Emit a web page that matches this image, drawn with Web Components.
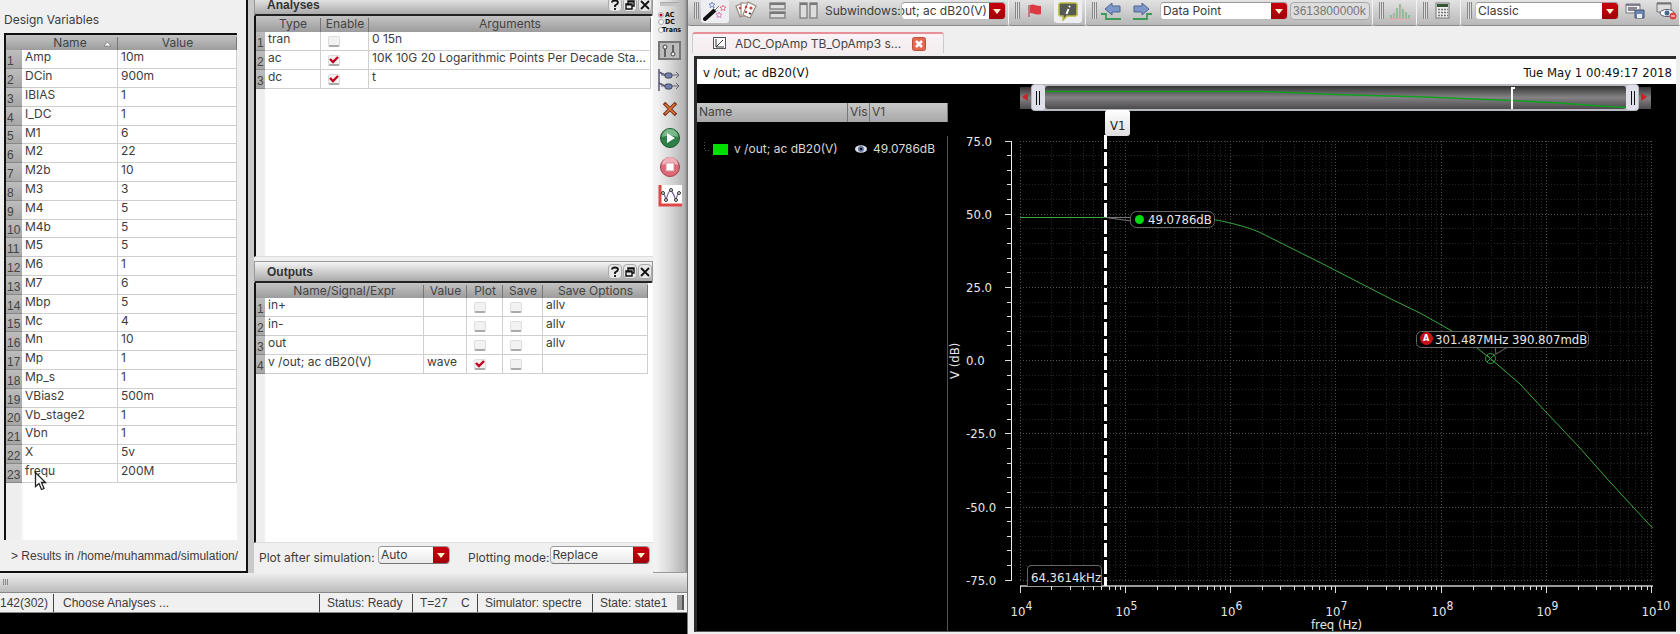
<!DOCTYPE html>
<html lang="en">
<head>
<meta charset="utf-8">
<title>ADC_OpAmp TB_OpAmp3 simulation</title>
<style>
  html, body { margin: 0; background: #000; }
  body { font: 12px/16px Inter, "Liberation Sans", sans-serif; color: #3c3c3c; overflow: hidden; }
</style>
</head>
<body>
<sim-desktop></sim-desktop>

<script>
const GRIDS = {
  vars: {
    head: 15, sort: 0, cols: [16, 96, 0], heads: ["Name", "Value"],
    rows: [["Amp", "10m"], ["DCin", "900m"], ["IBIAS", "1"], ["I_DC", "1"], ["M1", "6"], ["M2", "22"], ["M2b", "10"], ["M3", "3"],
      ["M4", "5"], ["M4b", "5"], ["M5", "5"], ["M6", "1"], ["M7", "6"], ["Mbp", "5"], ["Mc", "4"], ["Mn", "10"], ["Mp", "1"],
      ["Mp_s", "1"], ["VBias2", "500m"], ["Vb_stage2", "1"], ["Vbn", "1"], ["X", "5v"], ["frequ", "200M"]]
  },
  analyses: {
    head: 16, cols: [9, 56, 48, 0], heads: ["Type", "Enable", "Arguments"],
    rows: [["tran", false, "0 15n"], ["ac", true, "10K 10G 20 Logarithmic Points Per Decade Sta..."], ["dc", true, "t"]]
  },
  outputs: {
    head: 15, cols: [9, 159, 43, 36, 40, 0], heads: ["Name/Signal/Expr", "Value", "Plot", "Save", "Save Options"],
    rows: [["in+", "", false, false, "allv"], ["in-", "", false, false, "allv"], ["out", "", false, false, "allv"], ["v /out; ac dB20(V)", "wave", true, false, ""]]
  }
};

const define = (name, html, setup) => customElements.define(name, class extends HTMLElement {
  constructor() {
    super();
    const root = this.attachShadow({ mode: "open" });
    const t = document.createElement("template");
    t.innerHTML = typeof html === "function" ? html(this) : html;
    root.append(t.content.cloneNode(true));
    if (setup) setup(this, root);
  }
});

/* Drop-down with its own label and red arrow cell */
define("combo-box", el => `
<style>
  :host { display: flex; align-items: center; min-width: 0; }
  label { white-space: nowrap; padding-top: var(--label-drop, 0); }
  .box { display: flex; flex: 1; height: 18px; min-width: 0; box-sizing: border-box; border: 1px solid #999; border-color: #999 #aaa #777; border-radius: 4px;
         background: linear-gradient(#fff, #e9e9e9); overflow: hidden; }
  :host([flat]) .box { background: #fff; border-color: #999 #bbb #bbb; }
  select { flex: 1; min-width: 0; appearance: none; border: 0; padding: 0 0 0 2px; background: none; font: inherit; color: inherit; }
  :host([clipped]) select { margin-left: -6px; }
  svg { flex: none; background: linear-gradient(#c9000c, #a0000a); }
</style>
<label for="s">${el.getAttribute("label") || ""}</label>
<div class="box"><select id="s" ${el.hasAttribute("label") ? "" : `aria-label="${el.getAttribute("name")}"`}><option>${el.getAttribute("value")}</option></select>
<svg width="16" height="16"><path d="M4 6h8l-4 5z" fill="#fff0d0"/></svg></div>`);

/* Spreadsheet-like table */
define("data-grid", "", (el, root) => {
  const spec = GRIDS[el.getAttribute("source")];
  const cell = (v, r, h) => typeof v === "boolean" ? `<td class="c"><input type="checkbox" aria-label="${h} ${r}" ${v ? "checked" : ""}></td>` : `<td>${v}</td>`;
  root.innerHTML = `
<style>
  :host { display: block; }
  table { table-layout: fixed; border-collapse: separate; border-spacing: 0; width: 100%; }
  tr { height: 19px; }
  tbody tr:nth-child(5n) { height: 18px; }
  thead tr { height: ${spec.head}px; background: linear-gradient(#c4c4c4, #9c9c9c); }
  th { font-weight: normal; padding: 0; line-height: 14px; color: #444; }
  thead th { position: relative; }
  thead th + th::after { content: ""; position: absolute; right: 0; top: 2px; bottom: 0; border-right: 1px solid #777; }
  td { background: #fff; padding: 0 0 0 3px; line-height: 13px; vertical-align: top; border: 1px solid #cfcfcf; border-width: 0 1px 1px 0; white-space: nowrap; }
  tbody th { vertical-align: bottom; text-align: left; background: linear-gradient(#bdbdbd, #a6a6a6); border-bottom: 1px solid #888; white-space: nowrap;
       padding-left: 1px; font-family: "Liberation Sans", sans-serif; }
  td.c { padding: 4px 0 0 7px; line-height: 0; }
  input { appearance: none; margin: 0; width: 12px; height: 11px; border-radius: 2px; border: 1px solid #ddd; border-bottom: 2px solid #aaa;
          background: #f2f2f2 center / 10px 8px no-repeat; box-sizing: border-box; vertical-align: top; }
  input:checked { background-image: url("data:image/svg+xml,%3Csvg xmlns='http://www.w3.org/2000/svg' viewBox='0 0 10 8'%3E%3Cpath d='M1 3l3 3 5-5' fill='none' stroke='%23c00020' stroke-width='2.4'/%3E%3C/svg%3E"); }
  .sort { position: absolute; right: 6px; top: 6px; }
</style>
<table><colgroup>${spec.cols.map(w => `<col${w ? ` style="width:${w}px"` : ""}>`).join("")}</colgroup>
<thead><tr><th></th>${spec.heads.map((h, i) => `<th scope="col">${h}${spec.sort === i ? `<svg class="sort" width="9" height="6"><path d="M1 5L4.500 1L8 5z" fill="#fff" stroke="#666" stroke-width=".6"/></svg>` : ""}</th>`).join("")}</tr></thead>
<tbody>${spec.rows.map((r, i) => `<tr><th scope="row">${i + 1}</th>${r.map((v, j) => cell(v, r[0], spec.heads[j])).join("")}</tr>`).join("")}</tbody></table>`;
});

/* Dock panel with title bar */
define("dock-panel", el => `
<style>
  :host { display: flex; flex-direction: column; min-height: 0; }
  header { display: flex; align-items: center; gap: 1px; height: 22px; flex: none; padding: 0 0 0 12px; background: linear-gradient(#f4f4f4, #aaa); border: 1px solid #999; border-bottom: 2px solid #222; box-sizing: border-box; border-radius: 0 0 2px 0; }
  h2 { flex: 1; margin: 0; font: bold 12px/16px "Liberation Sans", sans-serif; color: #333; }
  button { width: 14px; height: 15px; padding: 0; border: 1px solid #aaa; border-radius: 4px; background: #e8e8e8; display: grid; place-items: center; }
  .body { flex: 1; min-height: 0; border-left: 2px solid #111; background: linear-gradient(90deg, #eee 8px, #fff 10px); border-bottom: 1px solid #ddd; }
</style>
<header><h2>${el.getAttribute("heading")}</h2>
<button aria-label="Help"><svg width="10" height="11"><path d="M2 3.500q0-2 3-2t3 2q0 1.500-3 3V8M5 9v2" fill="none" stroke="#111" stroke-width="1.800"/></svg></button>
<button aria-label="Float"><svg width="10" height="10"><path d="M3 4V1h6v5H7M1 4h6v5H1zM1 4.700h6M3 1.700h6" fill="none" stroke="#111" stroke-width="1.400"/></svg></button>
<button aria-label="Close"><svg width="10" height="10"><path d="M1 1l8 8M9 1l-8 8" stroke="#111" stroke-width="1.800"/></svg></button></header>
<div class="body"><slot></slot></div>`);

define("design-variables", `
<style>
  :host { display: flex; flex-direction: column; box-sizing: border-box; background: #f0f0f0; border: 2px solid #111; border-width: 0 2px 2px 0; position: relative; }
  h2 { margin: 12px 0 5px 4px; font: inherit; }
  .area { flex: 1; min-height: 0; margin: 0 9px 0 4px; border: 2px solid #111; border-width: 2px 0 0 2px; box-sizing: border-box; background: linear-gradient(90deg, #eee 14px, #fff 18px); }
  p { margin: 9px 0 8px; padding-left: 11px; font-family: "Liberation Sans", sans-serif; white-space: nowrap; line-height: 14px; }
  svg { position: absolute; left: 34px; top: 471px; }
</style>
<h2>Design Variables</h2>
<div class="area"><data-grid source="vars"></data-grid></div>
<p>&gt; Results in /home/muhammad/simulation/</p>
<svg width="14" height="21"><path d="M1.500 1.500v14l3.500-3 2.500 6 2.500-1-2.500-6h4z" fill="#fff" stroke="#222" stroke-width="1.300"/></svg>`);

define("side-tools", `
<style>
  :host { display: flex; flex-direction: column; align-items: center; box-sizing: border-box; background: linear-gradient(90deg, #f2f2f2 10%, #d8d8d8 50%, #b4b4b4 92%, #888); border-bottom: 1px solid #999; }
  i { width: 19px; height: 4px; margin: 2px 2px 4px 0; background: #c4c4c4; border-top: 1px solid #aaa; box-sizing: border-box; }
  button { padding: 0; border: 0; background: none; width: 26px; height: 24px; margin-bottom: 5px; display: grid; place-items: center; }
</style>
<i></i>
<button aria-label="Choose analyses"><svg width="26" height="26"><g fill="#fff" stroke="#aaa"><circle cx="4" cy="5" r="2.500"/><circle cx="4" cy="12" r="2.500"/><circle cx="4" cy="20" r="2.500"/></g><circle cx="4" cy="5" r="1.500" fill="#c02"/><g font-family="DejaVu Sans Condensed, sans-serif" font-weight="bold" font-size="7" fill="#111"><text x="8" y="7">AC</text><text x="8" y="14">DC</text><text x="5" y="22">Trans</text></g></svg></button>
<button aria-label="Variables"><svg width="24" height="20"><rect x="1" y="1" width="21" height="17" fill="#bbb" stroke="#777" stroke-width="2"/><path d="M7 8v8M15 4v8" stroke="#444" stroke-width="1.500"/><circle cx="7" cy="6" r="2" fill="#eee" stroke="#444"/><circle cx="15" cy="13" r="2" fill="#eee" stroke="#444"/></svg></button>
<button aria-label="Outputs"><svg width="26" height="24"><path d="M2 1v22M2 4l6 3M2 15l6 3" stroke="#557" stroke-width="1.500"/><path d="M4 7h18M4 18h18M19 4l3 3-3 3M19 15l3 3-3 3" fill="none" stroke="#667" stroke-width="1"/><rect x="8" y="5" width="7" height="5" rx="2" fill="#7080b0" stroke="#445"/><rect x="8" y="16" width="7" height="5" rx="2" fill="#7080b0" stroke="#445"/></svg></button>
<button aria-label="Delete"><svg width="16" height="16"><path d="M2 2l12 12M14 2L2 14" stroke="#732" stroke-width="3.500"/><path d="M3 3l10 10M13 3L3 13" stroke="#e07830" stroke-width="1.500"/></svg></button>
<button aria-label="Run"><svg width="22" height="22"><circle cx="11" cy="11" r="9.500" fill="#2f8048" stroke="#1f5a30"/><path d="M3 10a8 8 0 0 1 16 0q-8-3-16 0" fill="#7ab88a"/><path d="M8 6l8 5-8 5z" fill="#fff"/></svg></button>
<button aria-label="Stop"><svg width="22" height="22"><circle cx="11" cy="11" r="9.500" fill="#dd6878" stroke="#a04050"/><path d="M3 9a8 8 0 0 1 16 0q-8-3-16 0" fill="#f0b0b8"/><rect x="7" y="7" width="8" height="8" fill="#fff" stroke="#d89098"/></svg></button>
<button aria-label="Plot"><svg width="24" height="22"><rect x="2" y="0" width="22" height="19" fill="#fff"/><path d="M2 0v20h22" fill="none" stroke="#e04848" stroke-width="3"/><path d="M4 7q3 2 4 9 2-10 5-11 3 4 5 11 1-8 4-9" fill="none" stroke="#769" stroke-width="1.300"/><g fill="#ddd" stroke="#333"><circle cx="5" cy="8" r="1.500"/><circle cx="8" cy="15" r="1.500"/><circle cx="13" cy="5" r="1.500"/><circle cx="18" cy="15" r="1.500"/><circle cx="21" cy="8" r="1.500"/></g></svg></button>`);

define("status-bar", `
<style>
  :host { display: flex; align-items: center; height: 21px; box-sizing: border-box; border: 1px solid #888; border-width: 1px 0; background: #f0f0f0; font-family: "Liberation Sans", sans-serif; white-space: pre; }
  span { flex: none; border-right: 1px solid #444; line-height: 18px; padding-left: 7px; box-sizing: border-box; }
  .n { width: 54px; padding: 0; }
  .m { flex: 1; padding-left: 9px; }
  .s { width: 93px; }
  .t { width: 65px; }
  .sim { width: 115px; }
  .last { border: 0; width: 84px; }
  i { width: 7px; height: 15px; margin-right: 3px; background: #999; border-right: 2px solid #555; box-sizing: border-box; }
</style>
<span class="n">142(302)</span><span class="m">Choose Analyses ...</span><span class="s">Status: Ready</span><span class="t">T=27    C</span><span class="sim">Simulator: spectre</span><span class="last">State: state1</span><i></i>`);

define("setup-window", `
<style>
  :host { display: flex; flex-direction: column; height: calc(100vh - 21px); min-width: 0; background: #f0f0f0; }
  .main { flex: 1; display: flex; min-height: 0; }
  design-variables { flex: 0 0 248px; }
  .split { flex: 0 0 6px; background: #c9c9c9; }
  .docks { flex: 1; min-width: 0; display: flex; flex-direction: column; }
  .docks dock-panel { flex: 14 1 0; }
  .docks dock-panel.a { margin-top: -6px; margin-bottom: 4px; }
  .docks dock-panel.o { flex: 15 1 0; }
  data-grid { margin-right: 2px; }
  .o data-grid { margin-right: 5px; }
  .opts { --label-drop: 6px; display: flex; align-items: center; height: 30px; gap: 18px; padding: 0 3px 6px 5px; box-sizing: border-box; }
  .plot { flex: 0 0 191px; }
  .mode { flex: 1; }
  side-tools { flex: 0 0 34px; }
  .strip { height: 19px; padding-left: 2px; box-sizing: border-box; background: linear-gradient(#eee, #bbb); line-height: 18px; }
</style>
<div class="main">
  <design-variables></design-variables><div class="split"></div>
  <div class="docks">
    <dock-panel class="a" heading="Analyses"><data-grid source="analyses"></data-grid></dock-panel>
    <dock-panel class="o" heading="Outputs"><data-grid source="outputs"></data-grid></dock-panel>
    <div class="opts"><combo-box class="plot" label="Plot after simulation:&nbsp;" value="Auto"></combo-box><combo-box class="mode" label="Plotting mode:" value="Replace"></combo-box></div>
  </div>
  <side-tools></side-tools>
</div>
<div class="strip"><svg width="8" height="8"><path d="M1.500 1v6M3.500 1v6M5.500 1v6" stroke="#888"/></svg></div>
<status-bar></status-bar>`);

/* Toolbar section: grip followed by its controls */
define("tool-group", `
<style>
  :host { display: flex; align-items: center; box-sizing: border-box; height: 26px; padding: 0 2px 4px 6px; border-right: 1px solid #f4f4f4; border-bottom: 1px solid #888; border-radius: 0 0 3px 3px;
          background: linear-gradient(#e2e2e2, #b8b8b8); }
  i { flex: 0 0 5px; height: 17px; background: repeating-linear-gradient(90deg, #888 0 1px, #ddd 1px 2px); }
</style><i></i><slot></slot>`);

define("wave-toolbar", `
<style>
  :host { display: flex; height: 26px; background: #bbb; }
  button { flex: none; padding: 0; border: 0; background: none; height: 20px; display: grid; place-items: center; }
  .on { background: #ededf2; border-radius: 3px; height: 24px; }
  input { width: 80px; height: 18px; box-sizing: border-box; border: 1px solid #aaa; border-radius: 4px; background: #ddd; font: 12px "Liberation Sans", sans-serif; color: #777; padding: 0 2px; margin-left: 2px; }
  .last { flex: 1; min-width: 0; overflow: hidden; }
</style>
<tool-group style="flex:0 0 321px">
  <button class="on" style="width:28px;margin-left:2px" aria-label="Wand"><svg width="24" height="20"><path d="M2 18L13 8" stroke="#111" stroke-width="4" stroke-linecap="round"/><path d="M12 9l4-4" stroke="#eee" stroke-width="4"/><path d="M12 9l4-4" stroke="#777" stroke-width="1"/><g fill="none" stroke-width=".8"><path d="M9 1l1 2h2l-1.500 1.500.5 2L9 5.500 7 6.500l.5-2L6 3h2z" stroke="#5a7ac0"/><path d="M20 4l1 2h2l-1.500 1.500.5 2-2-1-2 1 .5-2L17 6h2z" stroke="#e06080"/><path d="M16 11l1 2h2l-1.500 1.500.5 2-2-1-2 1 .5-2L13 13h2z" stroke="#d070b0"/></g></svg></button>
  <button style="width:24px;margin-left:5px" aria-label="Cards"><svg width="24" height="19"><g fill="#fff" stroke="#998880" stroke-width="1.200"><path d="M2 5l7-3 4 11-7 3z"/><path d="M7 2h9v13H7z"/><path d="M14 1l8 4-6 12-7-3z"/></g><g fill="#c44"><circle cx="6" cy="7" r="1.200"/><circle cx="12" cy="6" r="1.300"/><circle cx="17" cy="7" r="1.600"/><circle cx="12" cy="11" r="1.200"/></g><path d="M15 12l2 1" stroke="#333" stroke-width="1.500"/></svg></button>
  <button style="width:18px;margin-left:11px" aria-label="Split rows"><svg width="18" height="18"><g fill="#ddd" stroke="#888" stroke-width="1.500"><rect x="1" y="1" width="15" height="6"/><rect x="1" y="10" width="15" height="6"/></g><path d="M1 2h15M1 11h15" stroke="#777" stroke-width="2"/></svg></button>
  <button style="width:19px;margin-left:12px" aria-label="Split columns"><svg width="19" height="18"><g fill="#ddd" stroke="#888" stroke-width="1.500"><rect x="1" y="1" width="7" height="15"/><rect x="11" y="1" width="7" height="15"/></g><path d="M1 2h7M11 2h7" stroke="#777" stroke-width="2"/></svg></button>
  <combo-box flat clipped style="flex:1;margin-left:7px" label="Subwindows:" value="out; ac dB20(V)"></combo-box>
</tool-group>
<tool-group style="flex:0 0 77px">
  <button style="width:14px;margin-left:8px" aria-label="Flag"><svg width="14" height="14"><path d="M1 1v12" stroke="#a66" stroke-width="1.500"/><path d="M2 1q3-1 5 0t6 1v8q-3 1-6 0T2 9z" fill="#dd3940"/></svg></button>
  <button class="on" style="width:28px;margin-left:12px" aria-label="Info"><svg width="20" height="20"><path d="M3 2h14q2 0 2 2v9q0 2-2 2H9l-4 4v-4H3q-2 0-2-2V4q0-2 2-2z" fill="#555a55" stroke="#b8b840" stroke-width="1.600"/><path d="M12 5l-1 1M10.500 8l-2 5" stroke="#fff" stroke-width="2"/></svg></button>
</tool-group>
<tool-group style="flex:0 0 287px">
  <button style="width:22px;margin-left:4px" aria-label="Previous"><svg width="22" height="20"><path d="M0 13h5v5h15" fill="none" stroke="#3c9a58" stroke-width="1.800"/><path d="M4 8l7-6v3h8v6h-8v3z" fill="#7b98c8" stroke="#4a6694"/></svg></button>
  <button style="width:22px;margin-left:8px" aria-label="Next"><svg width="22" height="20"><path d="M21 13h-5v5H2" fill="none" stroke="#3c9a58" stroke-width="1.800"/><path d="M18 8l-7-6v3H3v6h8v3z" fill="#7b98c8" stroke="#4a6694"/></svg></button>
  <combo-box flat style="flex:1;margin-left:7px" name="Snap mode" value="Data Point"></combo-box>
  <input aria-label="Snap value" value="3613800000k" disabled>
</tool-group>
<tool-group style="flex:0 0 44px"><button style="width:24px;margin-left:4px" aria-label="Histogram"><svg width="24" height="18"><path d="M3 17v-4M6 17v-6M9 17V6M12 17V2M15 17V7M18 17v-7M21 17v-4" stroke="#8cc098" stroke-width="2"/><path d="M1 17h22M7 12v5M13 4v12" stroke="#e8a8a8"/></svg></button></tool-group>
<tool-group style="flex:0 0 44px"><button style="width:16px;margin-left:6px" aria-label="Calculator"><svg width="15" height="17"><rect x="1" y="1" width="13" height="15" fill="#eee" stroke="#777"/><path d="M2 3.500h11" stroke="#353" stroke-width="3"/><path d="M3 7.500h10M3 10.500h10M3 13.500h10" stroke="#777" stroke-width="1.500" stroke-dasharray="2 1"/></svg></button></tool-group>
<tool-group class="last">
  <combo-box flat style="flex:1;margin-left:3px" name="Workspace" value="Classic"></combo-box>
  <button style="width:20px;margin-left:6px" aria-label="Save workspace"><svg width="20" height="18"><path d="M1 2h14v9H1z" fill="#eee" stroke="#778"/><path d="M1 3h14M3 6h9M3 8h7" stroke="#667" stroke-width="1.500"/><path d="M10 8h9v8h-9z" fill="#6a86b8" stroke="#456"/><path d="M12 12h5v4h-5z" fill="#eee"/></svg></button>
  <button style="width:21px;margin-left:11px" aria-label="Hide workspace"><svg width="21" height="19"><path d="M1 2h14v9H1z" fill="#ddd" stroke="#777"/><path d="M1 2.500h14" stroke="#777" stroke-width="2"/><ellipse cx="11" cy="12" rx="7" ry="3.500" fill="#fff" stroke="#557"/><circle cx="11" cy="12" r="2.500" fill="#468"/><circle cx="17" cy="15" r="3.500" fill="#d44"/><path d="M15 15h4" stroke="#fff"/></svg></button>
</tool-group>`);

define("wave-tab", `
<style>
  :host { display: flex; align-items: center; box-sizing: border-box; height: 21px; width: 252px; padding: 0 17px 0 20px; border: 1px solid #ccc; border-top: 2px solid #e89098; border-bottom: 0; border-radius: 3px 3px 0 0; background: linear-gradient(#faf2f4, #f4eef0); }
  a { flex: 1; margin: 0 8px; color: #444; text-decoration: none; white-space: nowrap; }
  button { padding: 0; border: 0; background: none; height: 14px; }
  svg { display: block; }
</style>
<svg width="14" height="13"><rect x=".5" y=".5" width="12" height="11" fill="#fff" stroke="#555"/><path d="M3 2v8h8M3 10l7-7" fill="none" stroke="#333"/></svg>
<a href="#">ADC_OpAmp TB_OpAmp3 s...</a>
<button aria-label="Close tab"><svg width="14" height="14"><rect x=".5" y=".5" width="13" height="13" rx="2" fill="#e46850" stroke="#b85040"/><path d="M4 4l6 6M10 4l-6 6" stroke="#fff" stroke-width="2.500"/></svg></button>`);

define("wave-legend", `
<style>
  :host { display: flex; flex-direction: column; }
  table { border-collapse: separate; border-spacing: 0; table-layout: fixed; width: 100%; margin: 19px 0 -26px; }
  thead tr { height: 19px; background: linear-gradient(#c8c8c8, #a8a8a8); }
  th { font-weight: normal; text-align: left; color: #444; padding: 0 0 2px 2px; border-right: 1px solid #777; line-height: 14px; }
  td { padding: 14px 0 0 3px; white-space: nowrap; color: #d8d8d8; height: 26px; }
  .name { display: flex; align-items: center; gap: 5px; padding-left: 4px; }
  svg { display: block; }
  td > svg { margin-left: 3px; }
  .rest { flex: 1; border-right: 1px solid #505050; }
</style>
<table><colgroup><col style="width:151px"><col style="width:22px"><col></colgroup>
<thead><tr><th scope="col">Name</th><th scope="col">Vis</th><th scope="col">V1</th></tr></thead>
<tbody><tr><td><div class="name"><svg width="25" height="14"><path d="M.5 0v8M1 8.500h5" stroke="#555" stroke-dasharray="1 2"/><rect x="9" y="2" width="15" height="11" fill="#00e000"/></svg>v /out; ac dB20(V)</div></td>
<td><svg width="14" height="10"><ellipse cx="7" cy="5" rx="6" ry="3.800" fill="#d8dce8"/><circle cx="7" cy="5" r="3" fill="#6878a0"/><circle cx="7" cy="5" r="1.300" fill="#112"/></svg></td><td>49.0786dB</td></tr></tbody></table>
<div class="rest"></div>`);

/* Bode magnitude plot with pan/zoom strip, axes and markers */
define("bode-plot", () => {
  const X0 = 1020, DEC = 105.333, Y0 = 141, MAJ = 73.2;
  const snap = v => Math.floor(v) + .5;
  let minor = "", major = "", ticks = "", labels = "";
  for (let d = 0; d <= 6; d++) {
    const x = snap(X0 + d * DEC);
    major += `M${x} 141V581`;
    ticks += `M${x} 586v7`;
    labels += `<text x="${x - 10}" y="616">10<tspan dy="-6" font-size="12">${d + 4}</tspan></text>`;
    if (d < 6) for (let m = 2; m < 10; m++) {
      const mx = snap(X0 + (d + Math.log10(m)) * DEC);
      minor += `M${mx} 141V581`;
      ticks += `M${mx} 586v4`;
    }
  }
  for (let i = 0; i <= 30; i++) {
    const y = snap(Y0 + i * MAJ / 5);
    if (i % 5) { minor += `M1020 ${y}H1653`; ticks += `M1007 ${y}h5`; }
    else {
      major += `M1020 ${y}H1653`; ticks += `M1005 ${y}h7`;
      labels += `<text x="966" y="${y + 4.5}">${(75 - i * 5).toFixed(1)}</text>`;
    }
  }
  return `
<style>
  :host { display: block; min-width: 0; min-height: 0; }
  svg { display: block; width: 100%; height: 100%; font: 13px "DejaVu Sans Condensed", "DejaVu Sans", sans-serif; fill: #e8e8e8; }
</style>
<svg viewBox="948 84 728 547" role="img" aria-label="v /out; ac dB20(V) against frequency">
<defs><linearGradient id="t" x2="0" y2="1"><stop offset="0" stop-color="#333"/><stop offset=".5" stop-color="#858285"/><stop offset="1" stop-color="#4c4a4c"/></linearGradient>
<linearGradient id="v" x2="0" y2="1"><stop offset="0" stop-color="#fff"/><stop offset="1" stop-color="#ddd"/></linearGradient></defs>
<g fill="url(#t)"><rect x="1020" y="87" width="12" height="22"/><rect x="1639" y="87" width="12" height="22"/></g>
<path d="M1028 93v8l-6-4zM1641 93v8l6-4z" fill="#d02028"/>
<rect x="1031" y="84" width="608" height="27" rx="4" fill="#b8b8c0"/>
<rect x="1032" y="85" width="13" height="25" rx="3" fill="#e0e0ea"/><rect x="1626" y="85" width="12" height="25" rx="3" fill="#e0e0ea"/>
<rect x="1045" y="86" width="581" height="23" rx="3" fill="url(#t)"/>
<path d="M1036.500 91v14M1039.500 91v14M1631.500 91v14M1634.500 91v14" stroke="#111"/>
<path d="M1045 91.500H1262L1336 94.500 1425 97 1512 100.500 1560 103 1600 106 1626 107.500" fill="none" stroke="#10a020" stroke-width="1.500"/>
<path d="M1512 87v22M1512 88h3" stroke="#fff" stroke-width="2"/>
<path d="${minor}" fill="none" stroke="#262626" stroke-dasharray="1 2"/>
<path d="${major}" fill="none" stroke="#505050" stroke-dasharray="1 2"/>
<path d="M1011.500 141V581" stroke="#eee"/><path d="M1020 586H1653" stroke="#999" stroke-width="2"/>
<path d="${ticks}" stroke="#ddd" fill="none"/>
${labels}
<text x="1311" y="629">freq (Hz)</text>
<text transform="translate(959 379) rotate(-90)">V (dB)</text>
<path d="M1020 217.500H1170C1200 217.500 1215 219 1230 223C1245 226.500 1255 230 1262 233.500L1287 246 1320 262.500 1356 281 1393 300 1420 313 1452 331 1477 348 1491 359 1505 371 1520 384 1546 412 1579 447 1610 482 1652.500 528" fill="none" stroke="#3aa840"/>
<path d="M1105.500 135V586" stroke="#fff" stroke-width="3" stroke-dasharray="14 3"/>
<rect x="1105" y="110" width="25" height="26" rx="3" fill="url(#v)"/><text x="1110" y="130" fill="#222">V1</text>
<path d="M1106 217.500H1131M1106 217.500L1131 221" stroke="#777"/>
<rect x="1130.500" y="211.500" width="84" height="16" rx="6" fill="#000" stroke="#666"/><circle cx="1139.500" cy="219.500" r="4.500" fill="#00dc10"/><text x="1148" y="224">49.0786dB</text>
<path d="M1495 347l1 7 12-7" fill="none" stroke="#666"/><path d="M1493 356l4-3" stroke="#666"/>
<rect x="1416.500" y="331.500" width="172" height="16" rx="5" fill="#000" stroke="#666"/>
<circle cx="1426.500" cy="338.500" r="6.500" fill="#c81018"/><text x="1423" y="341" font-size="9" font-weight="bold" fill="#fff">A</text><text x="1435" y="344">301.487MHz 390.807mdB</text>
<g fill="none" stroke="#2f9a38"><circle cx="1490.500" cy="358.500" r="5"/><path d="M1487 355l7 7M1494 355l-7 7"/></g>
<path d="M1027.500 586v-17q0-3.500 3.500-3.500h67q3.500 0 3.500 3.500v17" fill="#000" stroke="#666"/><text x="1031" y="582">64.3614kHz</text>
</svg>`;
});

define("wave-window", `
<style>
  :host { display: flex; flex-direction: column; height: 100vh; min-width: 0; background: #efeff0; border-left: 1px solid #777; box-sizing: border-box; }
  wave-tab { margin: 6px 0 3px 4px; }
  .frame { flex: 1; min-height: 0; display: flex; flex-direction: column; margin: 0 4px 2px 6px; border: 3px solid #2c2a2c; border-right: 0; border-bottom: 1px solid #555; background: #000; }
  .title { display: flex; justify-content: space-between; align-items: center; flex: 0 0 25px; padding: 2px 4px 0 6px; box-sizing: border-box; background: #fff; color: #111; font: 13px/20px "DejaVu Sans Condensed", sans-serif; }
  .view { flex: 1; min-height: 0; display: flex; }
  wave-legend { flex: 0 0 251px; }
  bode-plot { flex: 1; }
</style>
<wave-toolbar></wave-toolbar>
<wave-tab></wave-tab>
<div class="frame"><div class="title"><span>v /out; ac dB20(V)</span><span>Tue May 1 00:49:17 2018</span></div>
<div class="view"><wave-legend></wave-legend><bode-plot></bode-plot></div></div>`);

define("sim-desktop", `
<style>
  :host { display: grid; grid-template-columns: minmax(0, 687fr) minmax(0, 993fr); align-items: start; }
</style>
<setup-window></setup-window><wave-window></wave-window>`);
</script>
</body>
</html>
